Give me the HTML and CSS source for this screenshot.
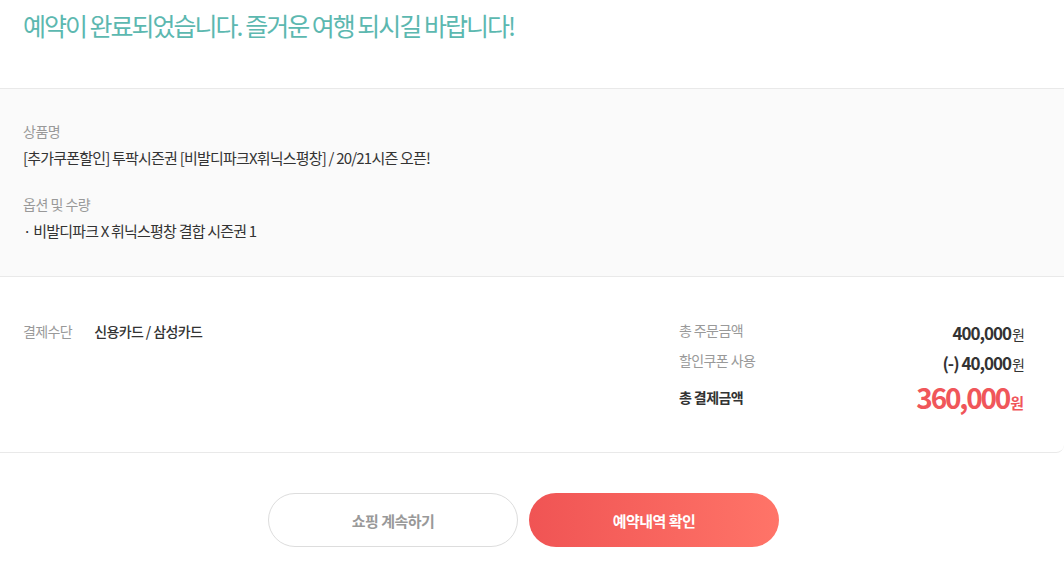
FILE: index.html
```html
<!DOCTYPE html>
<html>
<head>
  <title>예약 완료</title>
  <link rel="stylesheet" href="styles.css">
</head>
<body>
  <div class="page">
    <div class="complete-head">
      <h2 class="complete-title">예약이 완료되었습니다. 즐거운 여행 되시길 바랍니다!</h2>
    </div>

    <div class="product-box">
      <dl class="product-info">
        <dt>상품명</dt>
        <dd>[추가쿠폰할인] 투팍시즌권 [비발디파크X휘닉스평창] / 20/21시즌 오픈!</dd>
        <dt>옵션 및 수량</dt>
        <dd>· 비발디파크 X 휘닉스평창 결합 시즌권 1</dd>
      </dl>
    </div>

    <div class="pay-box">
      <div class="pay-method">
        <span class="pay-label">결제수단</span>
        <span class="pay-value">신용카드 / 삼성카드</span>
      </div>
      <ul class="pay-sum">
        <li>
          <span class="sum-label">총 주문금액</span>
          <span class="sum-price">400,000<em>원</em></span>
        </li>
        <li>
          <span class="sum-label">할인쿠폰 사용</span>
          <span class="sum-price">(-) 40,000<em>원</em></span>
        </li>
        <li class="total">
          <span class="sum-label">총 결제금액</span>
          <span class="sum-price">360,000<em>원</em></span>
        </li>
      </ul>
    </div>

    <div class="btn-area">
      <button class="btn btn-line">쇼핑 계속하기</button>
      <button class="btn btn-point">예약내역 확인</button>
    </div>
  </div>
</body>
</html>
```

FILE: styles.css
```css
body {
  margin: 0;
  padding: 0;
  font-family: "Noto Sans CJK KR", "Noto Sans", sans-serif;
  color: #333;
  background: #fff;
}

.page {
  width: 1064px;
}

.complete-head {
  height: 89px;
  padding: 0 23px;
  box-sizing: border-box;
  border-bottom: 1px solid #e9e9e9;
}

.complete-title {
  margin: 0;
  padding-top: 6px;
  font-size: 25px;
  font-weight: 400;
  line-height: 38px;
  letter-spacing: -2px;
  color: #5cb8b0;
}

.product-box {
  background: #fafafa;
  border-bottom: 1px solid #e9e9e9;
  padding: 22px 23px 34px;
}

.product-info {
  margin: 0;
}

.product-info dt {
  font-size: 14px;
  line-height: 20px;
  color: #999;
  letter-spacing: -0.5px;
  margin-top: 10px;
}

.product-info dd {
  margin: 6px 0 0;
  font-size: 15px;
  line-height: 22px;
  color: #333;
  letter-spacing: -0.8px;
  padding-bottom: 15px;
}

.product-info dd:last-child {
  padding-bottom: 0;
}

.pay-box {
  display: flex;
  justify-content: space-between;
  align-items: flex-start;
  padding: 43px 40px 33px 23px;
  border-bottom: 1px solid #e9e9e9;
  border-bottom-right-radius: 8px;
}

.pay-method {
  display: flex;
  gap: 22px;
  font-size: 14px;
  line-height: 22px;
  letter-spacing: -0.6px;
}

.pay-label {
  color: #999;
}

.pay-value {
  color: #333;
  font-weight: 500;
}

.pay-sum {
  list-style: none;
  margin: -5px 0 0;
  padding: 0;
  width: 345px;
}

.pay-sum li {
  display: flex;
  justify-content: space-between;
  align-items: center;
  height: 30px;
}

.sum-label {
  font-size: 14px;
  color: #999;
  letter-spacing: -0.6px;
}

.sum-price {
  font-size: 17px;
  font-weight: 700;
  color: #333;
  letter-spacing: -1px;
  padding-top: 4px;
}

.sum-price em {
  font-style: normal;
  font-size: 14px;
  font-weight: 400;
  margin-left: 1px;
}

.pay-sum li.total {
  height: 44px;
}

.total .sum-label {
  color: #333;
  font-weight: 700;
}

.total .sum-price {
  font-size: 28px;
  color: #f0565a;
  letter-spacing: -2.2px;
  padding-top: 0;
}

.total .sum-price em {
  font-size: 15px;
  font-weight: 700;
  letter-spacing: 0;
}

.btn-area {
  display: flex;
  justify-content: center;
  gap: 11px;
  padding: 40px 17px 0 0;
}

.btn {
  width: 250px;
  height: 54px;
  border-radius: 27px;
  font-family: inherit;
  font-size: 15px;
  font-weight: 700;
  letter-spacing: -0.5px;
  cursor: pointer;
}

.btn-line {
  background: #fff;
  border: 1px solid #ddd;
  color: #999;
}

.btn-point {
  border: none;
  color: #fff;
  background: linear-gradient(to right, #f05454, #ff7468);
}
```
